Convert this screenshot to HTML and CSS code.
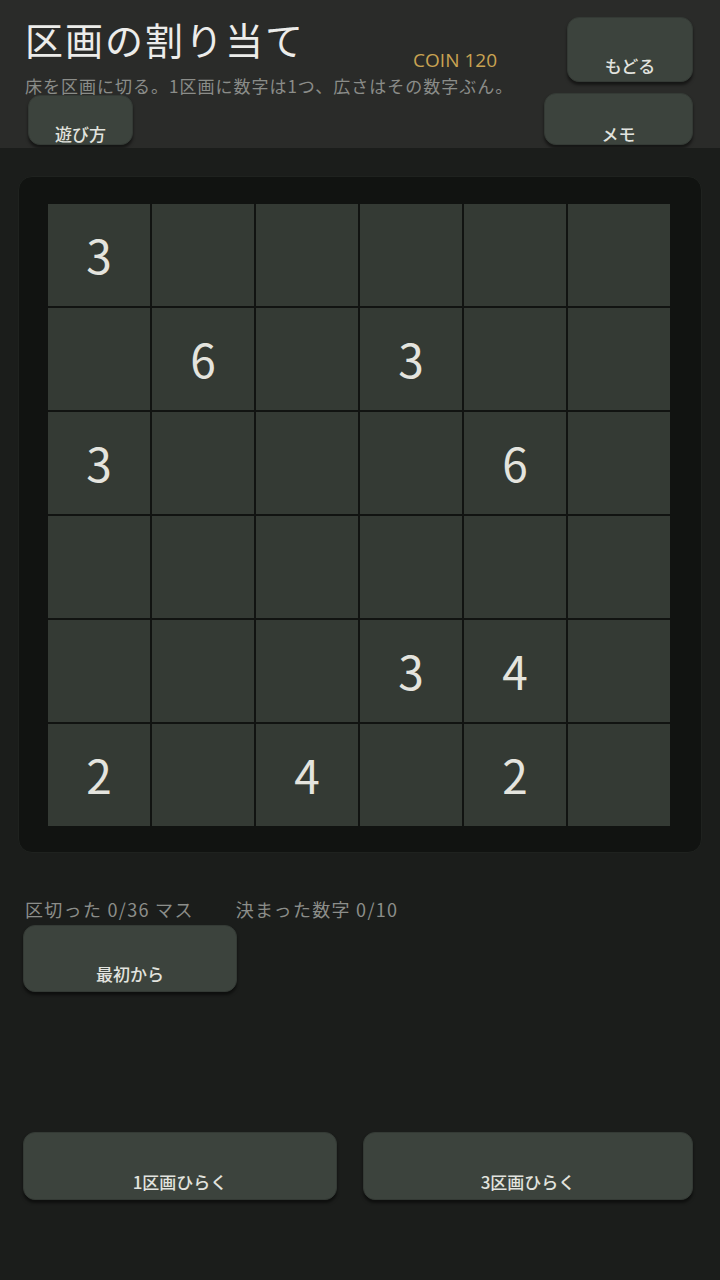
FILE: index.html
```html
<!DOCTYPE html>
<html lang="ja">
<head>
<meta charset="utf-8">
<title>区画の割り当て</title>
<link rel="stylesheet" href="styles.css">
</head>
<body>
<header class="hdr">
  <div class="hdr-top">
    <h1 class="title">区画の割り当て</h1>
    <div class="coin">COIN 120</div>
    <button class="btn btn-back">もどる</button>
  </div>
  <p class="sub">床を区画に切る。1区画に数字は1つ、広さはその数字ぶん。</p>
  <div class="hdr-bottom">
    <button class="btn btn-help">遊び方</button>
    <button class="btn btn-memo">メモ</button>
  </div>
</header>
<main class="main">
  <section class="board">
    <div class="grid">
      <div class="cell">3</div><div class="cell"></div><div class="cell"></div><div class="cell"></div><div class="cell"></div><div class="cell"></div>
      <div class="cell"></div><div class="cell">6</div><div class="cell"></div><div class="cell">3</div><div class="cell"></div><div class="cell"></div>
      <div class="cell">3</div><div class="cell"></div><div class="cell"></div><div class="cell"></div><div class="cell">6</div><div class="cell"></div>
      <div class="cell"></div><div class="cell"></div><div class="cell"></div><div class="cell"></div><div class="cell"></div><div class="cell"></div>
      <div class="cell"></div><div class="cell"></div><div class="cell"></div><div class="cell">3</div><div class="cell">4</div><div class="cell"></div>
      <div class="cell">2</div><div class="cell"></div><div class="cell">4</div><div class="cell"></div><div class="cell">2</div><div class="cell"></div>
    </div>
  </section>
  <div class="stats">
    <span>区切った 0/36 マス</span>
    <span>決まった数字 0/10</span>
  </div>
  <button class="btn btn-reset">最初から</button>
  <div class="actions">
    <button class="btn btn-open1">1区画ひらく</button>
    <button class="btn btn-open3">3区画ひらく</button>
  </div>
</main>
</body>
</html>
```
FILE: styles.css
```css
* { box-sizing: border-box; }
html, body { margin: 0; padding: 0; }
body {
  width: 720px;
  height: 1280px;
  overflow: hidden;
  background: #1b1d1b;
  color: #e4e4e0;
  font-family: "Noto Sans CJK JP", "Noto Sans", sans-serif;
}
.hdr {
  height: 148px;
  overflow: hidden;
  background: #2a2b29;
  padding: 0 27px 0 25px;
}
.hdr-top {
  display: flex;
  align-items: flex-start;
  padding-top: 17px;
  height: 82px;
}
.title {
  margin: 0;
  flex: 1;
  font-size: 38px;
  font-weight: 400;
  line-height: 44px;
  color: #ececea;
  letter-spacing: 2px;
}
.coin {
  margin-top: 33px;
  margin-right: 70px;
  font-family: "Open Sans", "Noto Sans", sans-serif;
  font-size: 19px;
  line-height: 20px;
  color: #c9a352;
}
.sub {
  margin: -6px 0 0;
  font-size: 17px;
  line-height: 20px;
  color: #8b8d89;
  white-space: nowrap;
  letter-spacing: 1px;
}
.hdr-bottom {
  display: flex;
  justify-content: space-between;
  align-items: flex-start;
  margin-top: -3px;
}
.btn {
  display: flex;
  align-items: flex-end;
  justify-content: center;
  margin: 0;
  padding: 0 0 6px;
  font-family: "Noto Sans CJK JP", "Noto Sans", sans-serif;
  font-size: 17px;
  font-weight: 500;
  line-height: 20px;
  color: #e2e3df;
  background: #3c433d;
  border: 1px solid #343a35;
  border-radius: 12px;
  box-shadow: 0 3px 3px rgba(0, 0, 0, 0.5);
}
.btn-back { width: 126px; height: 65px; padding-bottom: 5px; }
.btn-help { width: 105px; height: 50px; margin-top: 2px; margin-left: 3px; padding-bottom: 0; }
.btn-memo { width: 149px; height: 52px; padding-bottom: 0; }
.main {
  padding: 28px 18px 0;
}
.board {
  background: #111311;
  border: 1px solid #1f221f;
  border-radius: 14px;
  padding: 27px 31px 26px 29px;
}
.grid {
  display: grid;
  grid-template-columns: repeat(6, 102px);
  grid-auto-rows: 102px;
  gap: 2px;
}
.cell {
  background: #343a34;
  display: flex;
  align-items: center;
  justify-content: center;
  font-size: 46px;
  line-height: 1;
  color: #e4e4de;
  padding-bottom: 2px;
}
.stats {
  display: flex;
  gap: 42px;
  margin-top: 43px;
  padding-left: 7px;
  font-size: 18px;
  line-height: 26px;
  color: #8c8e8a;
  letter-spacing: 1.3px;
}
.btn-reset {
  width: 214px;
  height: 67px;
  margin: 3px 0 0 5px;
  padding-bottom: 7px;
}
.actions {
  display: grid;
  grid-template-columns: 314px 330px;
  gap: 26px;
  margin-top: 140px;
  padding-left: 5px;
}
.actions .btn { height: 68px; padding-bottom: 7px; }
```
